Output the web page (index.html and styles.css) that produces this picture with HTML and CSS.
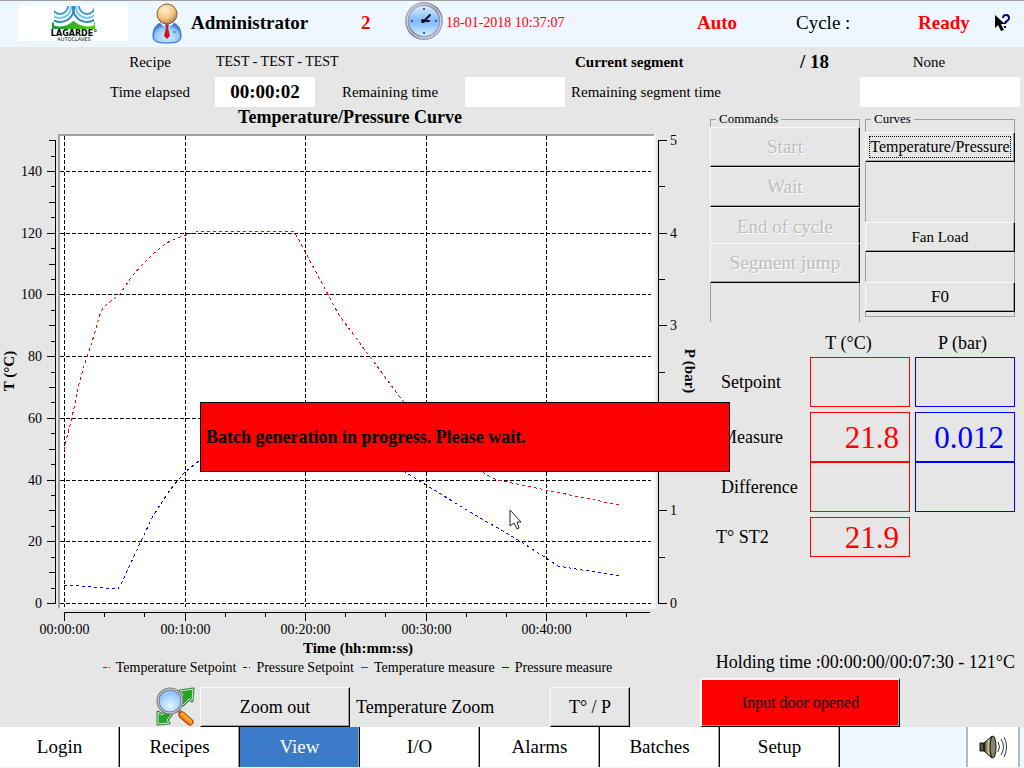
FILE: index.html
```
<!DOCTYPE html>
<html lang="en">
<head>
    <meta charset="UTF-8">
    <meta name="viewport" content="width=device-width, initial-scale=1.0">
    <title>Lagarde Autoclaves - View</title>
    <link rel="stylesheet" href="styles.css">
</head>
<body>
    <header class="header">
        <div class="logo">
            <svg width="110" height="36" viewBox="0 0 110 36">
                <defs>
                    <linearGradient id="grass" x1="0" x2="1">
                        <stop offset="0" stop-color="#1d9a3c"/>
                        <stop offset="1" stop-color="#5cc80e"/>
                    </linearGradient>
                    <clipPath id="waves"><path d="M36 1h40v22H36z"/></clipPath>
                </defs>
                <path d="M34 17q11 6 21-2 10 8 22 2v7H34z" fill="url(#grass)"/>
                <g fill="none" stroke-width="2" clip-path="url(#waves)">
                    <circle cx="42" cy="3" r="17" stroke="#fff" stroke-width="3"/>
                    <circle cx="69" cy="3" r="17" stroke="#fff" stroke-width="3"/>
                    <circle cx="42" cy="3" r="14" stroke="#2a88c4"/>
                    <circle cx="69" cy="3" r="14" stroke="#2a88c4"/>
                    <circle cx="42" cy="2" r="11" stroke="#7cc6ea"/>
                    <circle cx="69" cy="2" r="11" stroke="#7cc6ea"/>
                    <circle cx="42" cy="1" r="8" stroke="#3a9bd0"/>
                    <circle cx="69" cy="1" r="8" stroke="#3a9bd0"/>
                </g>
                <text x="56" y="31" class="logo-name">LAGARDE°</text>
                <text x="56" y="36" class="logo-sub">AUTOCLAVES</text>
            </svg>
        </div>
        <div class="user">
            <svg width="34" height="42" viewBox="0 0 34 42">
                <defs>
                    <radialGradient id="skin" cx=".4" cy=".3" r=".7">
                        <stop offset="0" stop-color="#fff0c8"/>
                        <stop offset=".6" stop-color="#f3c987"/>
                        <stop offset="1" stop-color="#b88248"/>
                    </radialGradient>
                    <radialGradient id="shirt" cx=".5" cy=".7" r=".6">
                        <stop offset="0" stop-color="#d8f0ff"/>
                        <stop offset=".7" stop-color="#90c8fc"/>
                        <stop offset="1" stop-color="#3a78e0"/>
                    </radialGradient>
                </defs>
                <path d="M3 34C3 25 8 20 17 20s14 5 14 14c0 6-5 7-14 7S3 40 3 34z" fill="url(#shirt)" stroke="#2a5cc8"/>
                <path d="M11 21l6 4 6-4" fill="none" stroke="#fff" stroke-width="2"/>
                <path d="M15 23h4l-1 3 2 8-3 3-3-3 2-8z" fill="#d3141c"/>
                <path d="M23 30h3" stroke="#3ac08a" stroke-width="2"/>
                <circle cx="17" cy="12" r="10" fill="url(#skin)" stroke="#8c5a2c"/>
            </svg>
            <strong>Administrator</strong>
        </div>
        <strong class="alert">2</strong>
        <div class="clock">
            <svg width="40" height="40" viewBox="0 0 40 40">
                <defs>
                    <linearGradient id="rim" x1="0" y1="0" x2="1" y2="1">
                        <stop offset="0" stop-color="#b8bccc"/>
                        <stop offset=".5" stop-color="#7c819c"/>
                        <stop offset="1" stop-color="#b4b6c8"/>
                    </linearGradient>
                    <linearGradient id="dial" x1="0" y1="0" x2="0" y2="1">
                        <stop offset="0" stop-color="#eaf4ff"/>
                        <stop offset=".5" stop-color="#7db9fa"/>
                        <stop offset="1" stop-color="#dcf7ff"/>
                    </linearGradient>
                </defs>
                <circle cx="19" cy="20" r="17" fill="url(#dial)" stroke="url(#rim)" stroke-width="4"/>
                <circle cx="19" cy="20" r="17" fill="none" stroke="#e4e6f0"/>
                <path d="M18 8h2M18 32h2M6 20h2M30 20h2" stroke="#3c50d0" stroke-width="2"/>
                <path d="M18 21l7-7M17 20h7" stroke="#0b1420" stroke-width="2" stroke-linecap="round"/>
                <circle cx="18" cy="20" r="2" fill="#0b1420"/>
            </svg>
            <time class="date">18-01-2018 10:37:07</time>
        </div>
        <strong class="alert">Auto</strong>
        <span>Cycle :</span>
        <strong class="alert">Ready</strong>
        <button class="help" type="button" aria-label="Help">
            <svg width="20" height="18" viewBox="0 0 20 18">
                <path d="M1 1v13l3-3 3 6 3-1-3-6h4z" fill="#000"/>
                <path d="M9 4q0-3 3-3t3 3q0 2-2 3t-2 3M11 12v2" fill="none" stroke="#00007f" stroke-width="2"/>
            </svg>
        </button>
    </header>

    <section class="info">
        <span class="info-label recipe">Recipe</span>
        <span class="recipe-name">TEST - TEST - TEST</span>
        <div class="segment">
            <strong>Current segment</strong>
            <strong class="segment-count">/ 18</strong>
        </div>
        <span class="segment-name">None</span>
        <label class="info-label elapsed" for="elapsed">Time elapsed</label>
        <input type="text" id="elapsed" value="00:00:02" readonly>
        <label class="info-label" for="remaining">Remaining time</label>
        <input type="text" id="remaining" readonly>
        <label class="remaining-segment" for="remainingSegment">Remaining segment time</label>
        <input type="text" id="remainingSegment" readonly>
    </section>

    <main class="main">
        <section class="curve">
            <h1>Temperature/Pressure Curve</h1>
            <svg class="chart" viewBox="0 128 700 530">
                <rect x="58" y="134" width="598" height="475" fill="#f3f3f3"/>
                <path d="M58 609V134h597l-2 2H60v471z" fill="#a0a0a0"/>
                <rect x="60" y="136" width="594" height="471" fill="#fff"/>
                <path id="grid" class="grid"/>
                <path id="axes" class="axes"/>
                <g id="labelsT" text-anchor="end"></g>
                <g id="labelsP"></g>
                <g id="labelsTime" text-anchor="middle"></g>
                <polyline class="line temperature" points="64,450 66,441 71,421 75,404 79,384 84,366 91,345 95,332 101,311 106,305 115,298 120,294 126,285 133,275 143,264 152,255 160,248 170,241 185,235 200,231 294,231 339,315 405,404 485,474 497,480 546,490 619,505"/>
                <polyline class="line pressure" points="64,585 80,586 118,589 121,584 130,565 141,541 152,518 160,505 170,490 178,480 185,472 200,460 300,420 405,472 426,485 470,512 515,538 546,558 558,566 619,576"/>
                <text class="axis-title" text-anchor="middle" transform="translate(14 371) rotate(-90)">T (°C)</text>
                <text class="axis-title" text-anchor="middle" transform="translate(685 371) rotate(90)">P (bar)</text>
                <text class="axis-title" text-anchor="middle" x="358" y="653">Time (hh:mm:ss)</text>
            </svg>
            <ul class="legend">
                <li><i class="key dotted"></i>Temperature Setpoint</li>
                <li><i class="key dotted blue"></i>Pressure Setpoint</li>
                <li><i class="key"></i>Temperature measure</li>
                <li><i class="key blue"></i>Pressure measure</li>
            </ul>
            <div class="tools">
                <svg width="40" height="40" viewBox="0 0 40 40">
                    <defs>
                        <radialGradient id="glass" cx=".5" cy=".7" r=".7">
                            <stop offset="0" stop-color="#e4f6ff"/>
                            <stop offset="1" stop-color="#7ab8fa"/>
                        </radialGradient>
                        <linearGradient id="handle" x1="0" y1="1" x2="1" y2="0">
                            <stop offset="0" stop-color="#d8400c"/>
                            <stop offset=".5" stop-color="#ff9a1c"/>
                            <stop offset="1" stop-color="#ffd850"/>
                        </linearGradient>
                    </defs>
                    <g stroke-linejoin="round">
                        <path d="M25 4l13-2-1 12-3-2-6 6-5-5 5-5z" fill="#28a428" stroke="#2f7d3c" stroke-width="3"/>
                        <path d="M25 4l13-2-1 12-3-2-6 6-5-5 5-5z" fill="#28a428" stroke="#d4eed2"/>
                        <path d="M3 25v12l11-1-2-3 4-5-4-4-5 4z" fill="#28a428" stroke="#2f7d3c" stroke-width="3"/>
                        <path d="M3 25v12l11-1-2-3 4-5-4-4-5 4z" fill="#28a428" stroke="#d4eed2"/>
                    </g>
                    <path d="M23 23l5 5" stroke="#888" stroke-width="4"/>
                    <path d="M27 28l8 7" stroke="#a8380c" stroke-width="7" stroke-linecap="round"/>
                    <path d="M27 28l8 7" stroke="url(#handle)" stroke-width="5" stroke-linecap="round"/>
                    <circle cx="15" cy="14" r="12" fill="url(#glass)" stroke="#777b84" stroke-width="3"/>
                    <circle cx="15" cy="14" r="12" fill="none" stroke="#d5d8de"/>
                </svg>
                <button class="btn zoom-out" type="button">Zoom out</button>
                <span class="tools-label">Temperature Zoom</span>
                <button class="btn zoom-tp" type="button">T° / P</button>
            </div>
        </section>

        <aside class="side">
            <div class="groups">
                <fieldset class="group commands">
                    <legend>Commands</legend>
                    <button class="btn" type="button" disabled>Start</button>
                    <button class="btn" type="button" disabled>Wait</button>
                    <button class="btn short" type="button" disabled>End of cycle</button>
                    <button class="btn" type="button" disabled>Segment jump</button>
                </fieldset>
                <fieldset class="group curves">
                    <legend>Curves</legend>
                    <button class="btn selected" type="button">Temperature/Pressure</button>
                    <button class="btn" type="button">Fan Load</button>
                    <button class="btn f0" type="button">F0</button>
                </fieldset>
            </div>
            <table class="readings">
                <thead>
                    <tr><td></td><th scope="col">T (°C)</th><th scope="col">P (bar)</th></tr>
                </thead>
                <tbody>
                    <tr class="spaced"><th scope="row">Setpoint</th><td><div class="box"></div></td><td><div class="box"></div></td></tr>
                    <tr><th scope="row">Measure</th><td><div class="box">21.8</div></td><td><div class="box">0.012</div></td></tr>
                    <tr class="spaced"><th scope="row">Difference</th><td><div class="box"></div></td><td><div class="box"></div></td></tr>
                    <tr class="probe"><th scope="row">T° ST2</th><td><div class="box">21.9</div></td></tr>
                </tbody>
            </table>
            <p class="holding">Holding time :00:00:00/00:07:30 - 121°C</p>
            <button class="btn door" type="button">Input door opened</button>
        </aside>

        <div class="message" role="alertdialog">Batch generation in progress. Please wait.</div>
        <svg class="pointer" width="14" height="21" viewBox="0 0 14 21">
            <path d="M2 1v16l4-3 3 6 2-1-2-6h4z" fill="#fff" stroke="#222"/>
        </svg>
    </main>

    <nav class="nav">
        <button type="button">Login</button>
        <button type="button">Recipes</button>
        <button type="button" class="active">View</button>
        <button type="button">I/O</button>
        <button type="button">Alarms</button>
        <button type="button">Batches</button>
        <button type="button">Setup</button>
        <button type="button" class="sound" aria-label="Sound">
            <svg width="30" height="28" viewBox="0 0 30 28">
                <defs>
                    <linearGradient id="cone" x1="0" x2="1">
                        <stop offset="0" stop-color="#2c2820"/>
                        <stop offset=".6" stop-color="#d8c898"/>
                        <stop offset="1" stop-color="#584c34"/>
                    </linearGradient>
                </defs>
                <path d="M2 10h4v8H2z" fill="#555" stroke="#111"/>
                <path d="M6 10l8-7v22l-8-7z" fill="url(#cone)" stroke="#111"/>
                <ellipse cx="15" cy="14" rx="3" ry="11" fill="#8a8270" stroke="#111"/>
                <path d="M20 9q3 5 0 10M23 6q5 8 0 16M26 4q5 10 0 20" fill="none" stroke="#333"/>
            </svg>
        </button>
    </nav>

    <script>
        const bottom = 603;
        const yT = t => Math.round(bottom - t * 3.086) + 0.5;
        const yP = p => Math.round(bottom - p * 92.6) + 0.5;
        const xTime = m => Math.round(64 + m * 12.05) + 0.5;
        let grid = '';
        let axes = 'M55.5 140V604M658.5 140V604M64 612.5H650';

        function label(id, x, y, text) {
            const el = document.createElementNS('http://www.w3.org/2000/svg', 'text');
            el.setAttribute('x', x);
            el.setAttribute('y', y);
            el.textContent = text;
            document.getElementById(id).appendChild(el);
        }

        for (let t = 0; t <= 150; t += 5) {
            const len = t % 20 === 0 ? 8 : t % 10 === 0 ? 6 : 4;
            axes += `M${55 - len} ${yT(t)}h${len}`;
            if (t % 20 === 0) {
                grid += `M60 ${yT(t)}H651`;
                label('labelsT', 42, yT(t) + 4.5, t);
            }
        }
        for (let p = 0; p <= 5; p += 0.5) {
            axes += `M659 ${yP(p)}h${p % 1 ? 6 : 8}`;
            if (p % 1 === 0) {
                label('labelsP', 670, yP(p) + 4.5, p);
            }
        }
        for (let i = 0; i < 15; i++) {
            const x = xTime(i * 10 / 3);
            axes += `M${x} 613v${i % 3 ? 4 : 8}`;
            if (i % 3 === 0) {
                grid += `M${x} 136V607`;
                label('labelsTime', x, 634, `00:${i / 3}0:00`);
            }
        }
        document.getElementById('grid').setAttribute('d', grid);
        document.getElementById('axes').setAttribute('d', axes);
    </script>
</body>
</html>
```
FILE: styles.css
```
* {
    box-sizing: border-box;
}
body {
    margin: 0;
    min-height: 100vh;
    display: flex;
    flex-direction: column;
    background: #e6e6e6;
    color: #000;
    font-family: "Bitstream Charter", Charter, "Liberation Serif", serif;
    font-size: 18px;
}
button, input {
    font: inherit;
    color: inherit;
}
.header {
    display: grid;
    grid-template-columns: 150fr 211fr 44fr 292fr 99fr 122fr 76fr 30fr;
    align-items: center;
    height: 47px;
    padding-bottom: 3px;
    border-top: 1px solid #a0a0a0;
    background: #edf7ff;
    font-size: 19px;
    line-height: 42px;
}
.logo {
    width: 110px;
    height: 36px;
    margin-left: 18px;
    background: #fff;
}
.logo svg, .user svg, .clock svg, .help svg {
    display: block;
}
.logo-name {
    font: bold 8px "DejaVu Sans", sans-serif;
    text-anchor: middle;
}
.logo-sub {
    font: 5px "DejaVu Sans", sans-serif;
    text-anchor: middle;
}
.user {
    display: flex;
    align-items: center;
    gap: 7px;
}
.clock {
    display: flex;
    align-items: center;
    gap: 1px;
}
.clock svg {
    margin-bottom: 3px;
}
.alert, .date {
    color: #f00;
}
.date {
    font-size: 14px;
}
.help {
    padding: 0;
    border: 0;
    background: none;
}
.info {
    display: grid;
    grid-template-columns: 85fr 130fr 100fr 150fr 100fr 295fr 160fr;
    grid-auto-rows: 30px;
    align-items: center;
    padding-right: 4px;
    font-size: 15px;
}
.info-label {
    text-align: center;
}
.recipe, .elapsed {
    grid-column: 2;
}
.recipe-name {
    grid-column: 3 / 6;
    padding-left: 1px;
    font-size: 14px;
}
.segment {
    display: flex;
    justify-content: space-between;
    align-items: center;
    padding: 0 31px 0 10px;
}
.segment-count {
    font-size: 19px;
}
.segment-name {
    padding-right: 22px;
    text-align: center;
}
.remaining-segment {
    padding-left: 6px;
}
.info input {
    width: 100%;
    height: 30px;
    padding: 0;
    border: 0;
    background: #fff;
    font-size: 19px;
    font-weight: bold;
    text-align: center;
}
.main {
    position: relative;
    flex: 1;
    display: grid;
    grid-template-columns: minmax(0, 1fr) 324px;
}
.curve {
    display: flex;
    flex-direction: column;
}
h1 {
    margin: 0;
    font-size: 18px;
    line-height: 21px;
    text-align: center;
}
.chart {
    display: block;
    width: 100%;
    font-size: 14px;
}
.grid, .axes, .line {
    fill: none;
    stroke: #000;
    shape-rendering: crispEdges;
}
.grid {
    stroke-dasharray: 4 2;
}
.line {
    stroke-dasharray: 3 3;
}
.temperature {
    stroke: #f00;
}
.pressure {
    stroke: #00f;
}
.axis-title {
    font-size: 15px;
    font-weight: bold;
}
.legend {
    display: flex;
    justify-content: center;
    gap: 7px;
    margin: 0;
    padding: 0 0 0 15px;
    list-style: none;
    font-size: 14px;
    line-height: 20px;
}
.key {
    display: inline-block;
    width: 7px;
    height: 1px;
    margin-right: 6px;
    background: #f00;
    vertical-align: 4px;
}
.key.blue {
    background: #00f;
}
.key.dotted {
    background: linear-gradient(90deg, #f00 4px, transparent 4px 6px, #f00 6px);
}
.key.dotted.blue {
    background: linear-gradient(90deg, #00f 4px, transparent 4px 6px, #00f 6px);
}
.tools {
    display: flex;
    align-items: center;
    margin-top: auto;
    padding-left: 155px;
}
.tools-label {
    width: 200px;
    padding-left: 6px;
}
.btn {
    height: 40px;
    padding: 0;
    border: 1px solid;
    border-color: #f8f8f8 #000 #000 #f8f8f8;
    background: #e6e6e6;
    box-shadow: inset -1px -1px #a0a0a0;
}
.btn:disabled {
    color: #bebebe;
    text-shadow: 1px 1px #fff;
}
.zoom-out {
    width: 150px;
    margin-left: 5px;
}
.zoom-tp {
    width: 80px;
}
.side {
    display: flex;
    flex-direction: column;
    padding: 4px 9px 0 10px;
}
.groups {
    display: grid;
    grid-template-columns: 1fr 1fr;
    gap: 5px;
    height: 211px;
}
.group {
    display: flex;
    flex-direction: column;
    min-width: 0;
    margin: 0;
    padding: 0;
    border: 1px solid #a0a0a0;
    font-size: 15px;
}
.group legend {
    margin-left: 5px;
    padding: 0 3px;
    font-size: 13px;
    line-height: 16px;
}
.group .btn {
    margin: 0 -1px;
}
.commands {
    border-bottom: 0;
}
.commands .btn {
    font-size: 19px;
}
.commands .short {
    height: 36px;
    padding-top: 3px;
    border-bottom: 0;
    box-shadow: inset -1px 0 #a0a0a0;
}
.curves {
    height: 206px;
}
.curves .btn {
    height: 30px;
    margin-bottom: 30px;
}
.curves .selected {
    margin: 5px -1px 60px;
    font-size: 16px;
    outline: 1px dotted #000;
    outline-offset: -5px;
}
.curves .f0 {
    margin-bottom: 4px;
    font-size: 17px;
}
.readings {
    width: 305px;
    margin-top: 7px;
    border-collapse: collapse;
    table-layout: fixed;
}
.readings th, .readings td {
    padding: 0;
    font-weight: normal;
}
.readings thead th {
    height: 28px;
    padding-right: 23px;
}
.readings thead th:last-child {
    padding-right: 0;
}
.readings thead td, .readings tbody th {
    width: 100px;
}
.readings thead th:nth-child(2) {
    width: 100px;
}
.readings tbody th {
    padding-left: 11px;
    text-align: left;
}
.readings .spaced > * {
    padding-bottom: 5px;
}
.readings .probe th {
    padding-left: 6px;
}
.readings td:nth-child(3) {
    padding-left: 5px;
}
.box {
    height: 50px;
    padding-right: 10px;
    border: 1px solid #f00;
    color: #f00;
    font-size: 31px;
    line-height: 50px;
    text-align: right;
}
td:nth-child(3) .box {
    border-color: #00f;
    color: #00f;
}
.probe .box {
    height: 40px;
    line-height: 40px;
}
.holding {
    margin: auto 0 4px;
    text-align: right;
    line-height: 24px;
    white-space: nowrap;
}
.door {
    width: 200px;
    height: 49px;
    margin-left: -10px;
    border-width: 2px 1px 1px 2px;
    background: #f00;
    font-size: 16px;
}
.message {
    position: absolute;
    left: 200px;
    top: 295px;
    width: 530px;
    padding: 0 5px;
    border: 1px solid #000;
    background: #f00;
    font-weight: bold;
    line-height: 68px;
}
.pointer {
    position: absolute;
    left: 508px;
    top: 402px;
}
.nav {
    display: flex;
    height: 41px;
    padding-bottom: 1px;
    background: #edf7ff;
}
.nav button {
    flex: 0 1 120px;
    padding: 0;
    border: 0;
    border-right: 1px solid #000;
    background: #fff;
    box-shadow: inset -1px 0 #a0a0a0;
    font-size: 19px;
}
.nav .active {
    background: #3b7ac6;
    color: #fff;
}
.nav .sound {
    flex-basis: 54px;
    margin: 0 4px 0 auto;
    border: solid #b8b8b8;
    border-width: 0 2px;
    box-shadow: none;
}
.nav svg {
    display: block;
    margin: auto;
}
```
